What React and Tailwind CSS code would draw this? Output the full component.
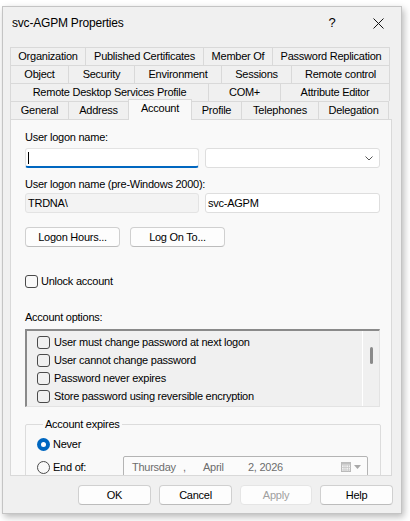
import React from 'react'

const font = "font-['Liberation_Sans',Arial,sans-serif]"

const tabRows = [
  [['Organization', 76], ['Published Certificates', 118], ['Member Of', 69], ['Password Replication', 117]],
  [['Object', 59], ['Security', 66], ['Environment', 87], ['Sessions', 70], ['Remote control', 98]],
  [['Remote Desktop Services Profile', 199], ['COM+', 72], ['Attribute Editor', 109]],
  [['General', 59], ['Address', 60], ['Account', 64], ['Profile', 50], ['Telephones', 77], ['Delegation', 70]],
]

function Tab({ label, width, first, selected }) {
  if (selected) {
    return (
      <div
        style={{ width }}
        className="relative z-10 self-end h-[21px] translate-y-px flex items-center justify-center bg-[#f9f9f9] border-t border-r border-l border-[#d9d9d9] -ml-px pb-[3px]"
      >
        {label}
      </div>
    )
  }
  return (
    <div
      style={{ width }}
      className={`h-full flex items-center justify-center bg-[#f0f0f0] border-t border-r border-[#d9d9d9] ${first ? 'border-l' : ''}`}
    >
      {label}
    </div>
  )
}

function Checkbox() {
  return <span className="w-[13px] h-[13px] rounded-[3px] border border-[#4a4a4a] shrink-0" />
}

function Button({ children, className = '' }) {
  return (
    <div className={`h-[20px] flex items-center justify-center rounded-[4px] border border-[#d0d0d0] border-b-[#bcbcbc] bg-[#fdfdfd] ${className}`}>
      {children}
    </div>
  )
}

export default function App() {
  return (
    <div className={`w-[410px] h-[521px] bg-white pl-[2px] pt-[6px] overflow-hidden text-[11px] tracking-[-0.25px] text-black ${font}`}>
      <div className="w-[400px] h-[508px] bg-[#f0f0f0] border border-[#c4c4c4] shadow-[2px_3px_7px_rgba(0,0,0,0.28)] flex flex-col">
        {/* title bar */}
        <div className="h-[32px] flex items-center pl-[9px] shrink-0">
          <span className="text-[12px] tracking-[-0.2px]">svc-AGPM Properties</span>
          <div className="flex-1" />
          <div className="w-[46px] h-full flex items-center justify-center text-[13px]">?</div>
          <div className="w-[46px] h-full flex items-center justify-center">
            <svg width="11" height="11" viewBox="0 0 11 11">
              <path d="M0.5 0.5 L10.5 10.5 M10.5 0.5 L0.5 10.5" stroke="#111" strokeWidth="1" />
            </svg>
          </div>
        </div>

        <div className="pl-[7px] mt-[8px] flex flex-col">
          {/* tabs */}
          <div className="w-[380px] flex flex-col">
            {tabRows.map((row, i) => (
              <div key={i} className="h-[18px] flex">
                {row.map(([label, w], j) => (
                  <Tab key={label} label={label} width={w} first={j === 0} selected={label === 'Account'} />
                ))}
              </div>
            ))}
          </div>

          {/* tab page */}
          <div className="w-[382px] h-[357px] bg-[#f9f9f9] border border-[#d9d9d9] overflow-hidden pl-[14px] pr-[10px] pt-[9px]">
            <div className="h-[16px] leading-[16px]">User logon name:</div>
            <div className="mt-[3px] flex gap-[6px]">
              <div className="w-[174px] h-[20px] bg-white border border-[#e3e3e3] border-b-2 border-b-[#0067c0] rounded-[3px] flex items-center pl-[2px]">
                <span className="w-px h-[12px] bg-black" />
              </div>
              <div className="w-[175px] h-[20px] bg-white border border-[#dedede] rounded-[3px] flex items-center justify-end pr-[6px]">
                <svg width="8" height="5" viewBox="0 0 8 5">
                  <path d="M0.5 0.5 L4 4 L7.5 0.5" fill="none" stroke="#555" strokeWidth="1" />
                </svg>
              </div>
            </div>

            <div className="mt-[8px] h-[16px] leading-[16px]">User logon name (pre-Windows 2000):</div>
            <div className="mt-[1px] flex gap-[6px]">
              <div className="w-[174px] h-[20px] bg-[#f3f3f3] border border-[#e3e3e3] rounded-[3px] flex items-center pl-[2px]">TRDNA\</div>
              <div className="w-[175px] h-[20px] bg-white border border-[#dedede] rounded-[3px] flex items-center pl-[2px]">svc-AGPM</div>
            </div>

            <div className="mt-[14px] flex gap-[10px]">
              <Button className="w-[95px]">Logon Hours...</Button>
              <Button className="w-[95px]">Log On To...</Button>
            </div>

            <div className="mt-[26px] h-[16px] flex items-center gap-[3px]">
              <Checkbox />
              <span>Unlock account</span>
            </div>

            <div className="mt-[20px] h-[16px] leading-[16px]">Account options:</div>
            <div className="mt-[4px] w-[355px] h-[78px] bg-[#f0f0f0] border-t-2 border-l-2 border-r border-b border-t-[#8a8a8a] border-l-[#8a8a8a] border-r-[#e3e3e3] border-b-[#e3e3e3] flex overflow-hidden">
              <div className="flex-1 pl-[10px] pt-[2px] flex flex-col">
                {[
                  'User must change password at next logon',
                  'User cannot change password',
                  'Password never expires',
                  'Store password using reversible encryption',
                ].map(t => (
                  <div key={t} className="h-[18px] flex items-center gap-[4px]">
                    <Checkbox />
                    <span>{t}</span>
                  </div>
                ))}
              </div>
              <div className="w-[17px] border-l border-white flex justify-center pt-[16px]">
                <span className="w-[3px] h-[17px] rounded-full bg-[#8a8a8a] ml-[1px]" />
              </div>
            </div>

            <fieldset className="mt-[9px] w-[356px] border border-[#dcdcdc] rounded-[2px] pl-[11px]">
              <legend className="ml-[6px] px-[2px] h-[16px] leading-[16px]">Account expires</legend>
              <div className="pt-[4px] h-[20px] flex items-center gap-[3px]">
                <span className="w-[13px] h-[13px] rounded-full bg-[#0067c0] flex items-center justify-center shrink-0">
                  <span className="w-[5px] h-[5px] rounded-full bg-white" />
                </span>
                <span>Never</span>
              </div>
              <div className="mt-[4px] flex items-center">
                <div className="w-[86px] flex items-center gap-[3px]">
                  <span className="w-[13px] h-[13px] rounded-full border border-[#4a4a4a] shrink-0" />
                  <span>End of:</span>
                </div>
                <div className="w-[245px] h-[22px] bg-[#fbfbfb] border border-[#b4b4b4] rounded-[2px] flex items-center pl-[8px] text-[#6d6d6d]">
                  <span className="w-[51px]">Thursday</span>
                  <span className="w-[20px]">,</span>
                  <span className="w-[45px]">April</span>
                  <span>2, 2026</span>
                  <div className="flex-1" />
                  <svg width="11" height="10" viewBox="0 0 11 10" className="mr-[2px]">
                    <rect x="0.5" y="0.5" width="9" height="9" fill="#f2f2f2" stroke="#b8b8b8" />
                    <path d="M0.5 3 H9.5 M0.5 5.5 H9.5 M0.5 8 H9.5 M3 3 V9.5 M5 3 V9.5 M7.5 3 V9.5" stroke="#c8c8c8" strokeWidth="0.8" />
                    <rect x="0.5" y="0.5" width="9" height="2" fill="#c0c0c0" />
                  </svg>
                  <svg width="7" height="4" viewBox="0 0 7 4" className="mr-[6px]">
                    <path d="M0 0 H7 L3.5 4 Z" fill="#a8a8a8" />
                  </svg>
                </div>
              </div>
            </fieldset>
          </div>
        </div>

        {/* dialog buttons */}
        <div className="mt-[9px] flex justify-end gap-[8px] pr-[8px]">
          <Button className="w-[73px] border-[#0067c0] border-b-[#0067c0]">OK</Button>
          <Button className="w-[73px]">Cancel</Button>
          <Button className="w-[72px] bg-[#f5f5f5] border-[#e5e5e5] border-b-[#e5e5e5] text-[#a0a0a0]">Apply</Button>
          <Button className="w-[73px]">Help</Button>
        </div>
      </div>
    </div>
  )
}
